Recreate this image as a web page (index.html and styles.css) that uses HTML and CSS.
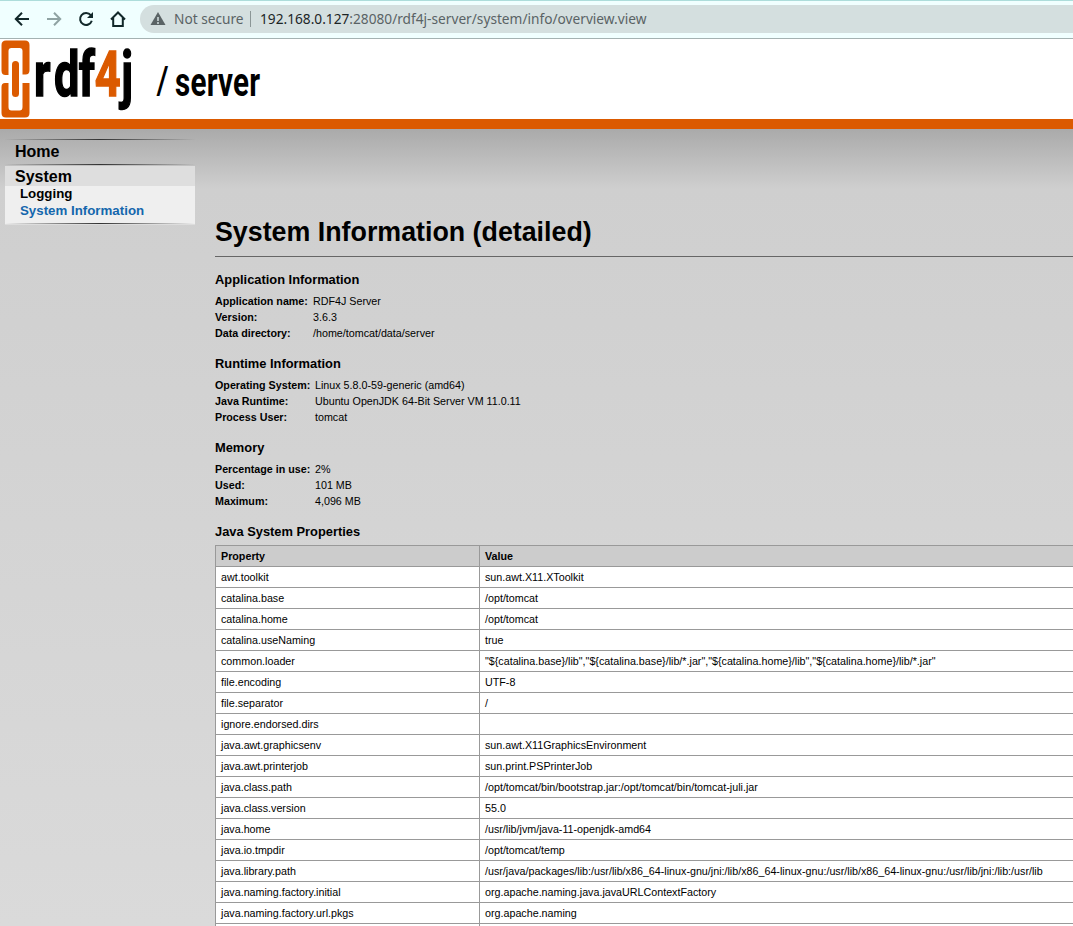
FILE: index.html
```
<!DOCTYPE html>
<html lang="en">
<head>
<meta charset="utf-8">
<title>System Information</title>
<link rel="stylesheet" href="styles.css">
</head>
<body>
<div class="toolbar">
  <svg class="nav-icons" width="140" height="36" viewBox="0 0 140 36" fill="none" stroke-width="2">
    <path d="M29 18H16M22 11.8L15.8 18L22 24.200" stroke="#12282a"/>
    <path d="M47 18H60M54 11.800L60.200 18L54 24.200" stroke="#8fa3a3"/>
    <path d="M90.800 14.200A6 6 0 1 0 91.800 19.800" stroke="#12282a"/>
    <path d="M93 11V17H87Z" fill="#12282a"/>
    <path d="M111 18.500L118 11.500L125 18.500M113.200 17V25H122.800V17" stroke="#12282a"/>
  </svg>
  <div class="address">
    <svg class="warning" width="16" height="14" viewBox="0 0 16 14"><path d="M8 0L15.500 13H0.500Z" fill="#5a6365"/><path d="M8 5V9M8 10V12" stroke="#d4dfdf" stroke-width="1.500"/></svg>
    <span class="insecure">Not secure</span>
    <span class="divider"></span>
    <span class="url"><span class="host">192.168.0.127</span>:28080/rdf4j-server/system/info/overview.view</span>
  </div>
</div>
<header class="banner">
  <svg class="logo" width="280" height="80" viewBox="0 39 280 80">
    <g fill="#db5a00">
      <path d="M6 40.500H25Q29.500 40.500 29.500 45V70Q29.500 74.500 25.500 74.500H22.500V51Q22.500 48 19.500 48H11.500Q8.500 48 8.500 51V75H5.500Q1.500 75 1.500 70.500V45Q1.500 40.500 6 40.500Z"/>
      <path d="M6 117.500H25Q29.500 117.500 29.500 113V83H22.500V107Q22.500 110.500 19.500 110.500H11.500Q8.500 110.500 8.500 107V83H5Q1.500 83 1.500 87V113Q1.500 117.500 6 117.500Z"/>
      <rect x="12" y="61" width="7" height="36" rx="3.500"/>
    </g>
    <g class="wordmark">
      <text transform="translate(0 95.500) scale(.74 1.03)" x="46 73 106.500 128 164">rdf<tspan class="four">4</tspan>j</text>
    </g>
    <text class="product slash" transform="translate(156.500 94) scale(.8 1)">/</text>
    <text class="product" transform="translate(175 96) scale(.74 1)" textLength="115">server</text>
  </svg>
</header>
<div class="page">
  <nav class="menu">
    <div class="item">Home</div>
    <div class="group">
      <div class="item current">System</div>
      <div class="sub">Logging</div>
      <div class="sub active">System Information</div>
    </div>
  </nav>
  <main class="content">
    <h1>System Information (detailed)</h1>
    <h2>Application Information</h2>
    <dl class="app"><dt>Application name:</dt><dd>RDF4J Server</dd><dt>Version:</dt><dd>3.6.3</dd><dt>Data directory:</dt><dd>/home/tomcat/data/server</dd></dl>
    <h2>Runtime Information</h2>
    <dl><dt>Operating System:</dt><dd>Linux 5.8.0-59-generic (amd64)</dd><dt>Java Runtime:</dt><dd>Ubuntu OpenJDK 64-Bit Server VM 11.0.11</dd><dt>Process User:</dt><dd>tomcat</dd></dl>
    <h2>Memory</h2>
    <dl><dt>Percentage in use:</dt><dd>2%</dd><dt>Used:</dt><dd>101 MB</dd><dt>Maximum:</dt><dd>4,096 MB</dd></dl>
    <h2>Java System Properties</h2>
    <table class="props">
      <tr><th>Property</th><th>Value</th></tr>
      <tr><td>awt.toolkit</td><td>sun.awt.X11.XToolkit</td></tr>
      <tr><td>catalina.base</td><td>/opt/tomcat</td></tr>
      <tr><td>catalina.home</td><td>/opt/tomcat</td></tr>
      <tr><td>catalina.useNaming</td><td>true</td></tr>
      <tr><td>common.loader</td><td>"${catalina.base}/lib","${catalina.base}/lib/*.jar","${catalina.home}/lib","${catalina.home}/lib/*.jar"</td></tr>
      <tr><td>file.encoding</td><td>UTF-8</td></tr>
      <tr><td>file.separator</td><td>/</td></tr>
      <tr><td>ignore.endorsed.dirs</td><td></td></tr>
      <tr><td>java.awt.graphicsenv</td><td>sun.awt.X11GraphicsEnvironment</td></tr>
      <tr><td>java.awt.printerjob</td><td>sun.print.PSPrinterJob</td></tr>
      <tr><td>java.class.path</td><td>/opt/tomcat/bin/bootstrap.jar:/opt/tomcat/bin/tomcat-juli.jar</td></tr>
      <tr><td>java.class.version</td><td>55.0</td></tr>
      <tr><td>java.home</td><td>/usr/lib/jvm/java-11-openjdk-amd64</td></tr>
      <tr><td>java.io.tmpdir</td><td>/opt/tomcat/temp</td></tr>
      <tr><td>java.library.path</td><td>/usr/java/packages/lib:/usr/lib/x86_64-linux-gnu/jni:/lib/x86_64-linux-gnu:/usr/lib/x86_64-linux-gnu:/usr/lib/jni:/lib:/usr/lib</td></tr>
      <tr><td>java.naming.factory.initial</td><td>org.apache.naming.java.javaURLContextFactory</td></tr>
      <tr><td>java.naming.factory.url.pkgs</td><td>org.apache.naming</td></tr>
      <tr><td></td><td></td></tr>
    </table>
  </main>
</div>
</body>
</html>
```
FILE: styles.css
```
* { box-sizing: border-box; }
body { margin: 0; width: 1073px; height: 926px; overflow: hidden; display: flex; flex-direction: column; font-family: "Liberation Sans", Arial, sans-serif; font-size: 10.72px; color: #000; }
.toolbar { height: 39px; flex: none; display: flex; background: #f0ffff; border-top: 1px solid #addddb; border-bottom: 1px solid #a4b2b2; }
.nav-icons { flex: none; }
.address { flex: 1; height: 28px; margin-top: 4px; padding: 0 0 1px 10px; border-radius: 14px 0 0 14px; background: #d4dfdf; display: flex; align-items: center; font-family: "Noto Sans", sans-serif; font-size: 13.7px; color: #5a6365; white-space: nowrap; }
.insecure { width: 69px; margin-left: 8px; }
.divider { width: 1px; height: 16px; margin: 0 9px 0 7px; background: #8b9696; }
.host { color: #1c2526; }
.banner { height: 90px; flex: none; background: #fff; border-bottom: 10px solid #db5a00; }
.logo { display: block; overflow: visible; }
.wordmark { font: 700 61px Roboto, sans-serif; stroke: #000; stroke-width: 1.5px; }
.four { fill: #db5a00; stroke: #db5a00; }
.product { font: 700 40px Roboto, sans-serif; }
.slash { font-size: 39px; font-weight: 500; }
.page { flex: 1; min-height: 0; display: flex; background: linear-gradient(#aaa, #cfcfcf 60px, #dadada); }
.menu { flex: none; width: 190px; margin: 10px 20px 0 5px; font-weight: 700; }
.menu .item { font-size: 16px; line-height: 20px; padding-left: 10px; }
.menu > .item { height: 26px; padding-top: 2px; border-style: solid; border-width: 1px 0; border-image: linear-gradient(90deg, transparent, #333 50%, transparent) 1; }
.group { height: 59px; margin-top: 1px; background: #efefef; border-bottom: 1px solid #ddd; }
.group::after { content: ""; display: block; height: 1px; margin-top: 4px; background: linear-gradient(90deg, transparent, #333 50%, transparent); }
.menu .current { height: 20px; line-height: 22px; background: #dedede; }
.sub { font-size: 13.3px; line-height: 17px; padding-left: 15px; }
.current + .sub { line-height: 16px; }
.content { flex: none; width: 900px; }
.active { color: #1467ad; }
h1 { font-size: 26.8px; line-height: 31px; margin: 88px 0 15px; padding-bottom: 8px; border-bottom: 1px solid #666; }
h2 { font-size: 12.86px; line-height: 16px; margin: 0 0 5px; }
dl { display: grid; grid-template-columns: 100px auto; margin: 0 0 15px; line-height: 16px; }
.app { grid-template-columns: 98px auto; }
dt { font-weight: 700; }
dd { margin: 0; }
.props { width: 900px; table-layout: fixed; border-collapse: collapse; background: #fff; }
.props th, .props td { height: 21px; border: 1px solid #999; padding: 0 5px; line-height: 20px; text-align: left; white-space: nowrap; }
.props th { background: #ccc; }
.props th:first-child { width: 264px; }
```
